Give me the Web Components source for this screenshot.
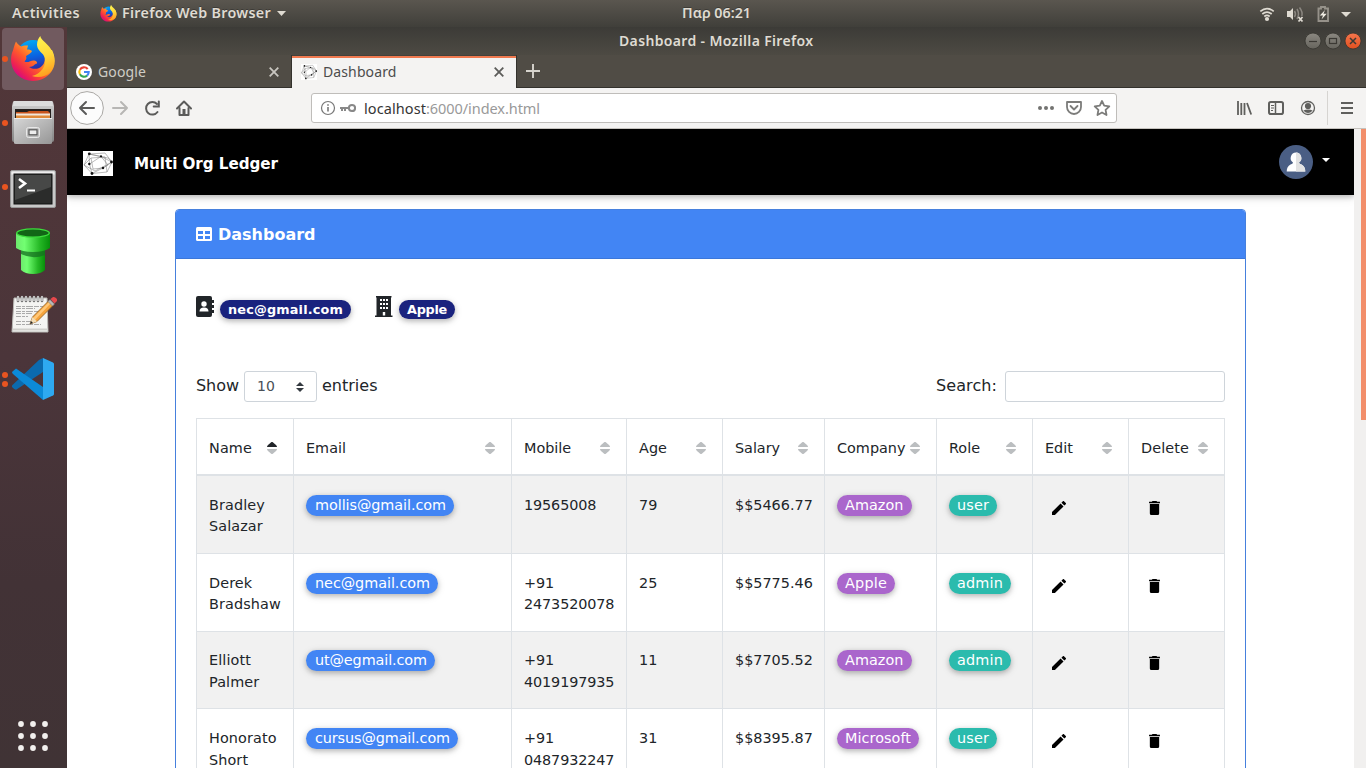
<!DOCTYPE html>
<html lang="en">
<head>
<meta charset="utf-8">
<title>Dashboard</title>
<style>
html,body{margin:0;height:100%;overflow:hidden;background:#fff;font-family:"DejaVu Sans",sans-serif}
</style>
</head>
<body>
<desktop-shell></desktop-shell>
<script>
const define = (name, css, html) => customElements.define(name, class extends HTMLElement {
  connectedCallback() {
    if (this.shadowRoot) return;
    const root = this.attachShadow({mode: 'open'});
    root.innerHTML = `<style>*{box-sizing:border-box}svg{display:block;flex:none}${css}</style>` + (typeof html === 'function' ? html(this) : html);
  }
});

define('desktop-shell', `
:host{display:flex;flex-direction:column;width:1366px;height:768px;overflow:hidden}
main{display:flex;flex:1;min-height:0}`, `
<top-panel></top-panel>
<main><app-dock></app-dock><browser-window></browser-window></main>`);

const firefox = size => `<svg width="${size}" height="${size}" viewBox="0 0 46 46">
<defs><linearGradient id="fo" x1=".9" y1=".1" x2=".15" y2=".85"><stop offset="0" stop-color="#fff24a"/><stop offset=".3" stop-color="#ffb02a"/><stop offset=".6" stop-color="#ff5a2c"/><stop offset=".85" stop-color="#f0244f"/><stop offset="1" stop-color="#d80c7c"/></linearGradient>
<linearGradient id="fb" x1=".4" y1="0" x2=".6" y2="1"><stop offset="0" stop-color="#00a8f4"/><stop offset=".5" stop-color="#0a62e0"/><stop offset="1" stop-color="#3a1b8c"/></linearGradient>
<linearGradient id="fy" x1=".4" y1="0" x2=".6" y2="1"><stop offset="0" stop-color="#fff44f"/><stop offset=".5" stop-color="#ffd83a"/><stop offset="1" stop-color="#ff9a1e"/></linearGradient></defs>
<circle cx="23" cy="20.500" r="16.500" fill="url(#fb)"/>
<path d="M6 5.500C7.500 8 9 9.500 11.500 10.500C13 9.500 15 9.300 18 9.500L17 13.500C19 13.300 21 14 22 15C21 18 17 18.500 16 20.500C17 22 16 24 14.500 25.500C18 27.500 21 24 24 24.500C26 24.500 27.500 26 27 27.500C24 28 24 31 19 31C25 35 32 32 34 27C35.500 23 35 18 32 14L42 14C46 22 46 31 39.500 38C31 47 16 47 7.500 39C.5 32 -.5 22 3 14.500C3.500 12 4.800 8 6 5.500Z" fill="url(#fo)"/>
<path d="M30.300 0C31 4 36 6.500 39.500 11C46 19 45.500 30 40.500 36C36 41 28 42 22 40C31 38 36.500 30 34.800 22C33.500 16.500 27.500 15.500 27 9C27 5 28.500 2 30.300 0Z" fill="url(#fy)"/></svg>`;

define('top-panel', `
:host{display:flex;align-items:center;height:27px;flex:none;background:linear-gradient(#5a564f,#403f3a);color:#dfdbd2;font:600 14.300px/27px "Noto Sans",sans-serif;padding:0 10px 0 12px;text-shadow:0 -1px #0004}
fit-text{margin-top:-2px}
.l,.c,.r{display:flex;align-items:center}.l{width:670px}.r{margin-left:auto}
.l svg:first-of-type{margin:0 5px 0 20px}.car{margin-left:6px}`, `
<div class="l"><fit-text w="68">Activities</fit-text>${firefox(17)}<fit-text w="149">Firefox Web Browser</fit-text>
<svg class="car" width="9" height="5"><path d="M0 0H9L4.500 5Z" fill="#dfdbd2"/></svg></div>
<div class="c"><fit-text w="69">Παρ 06:21</fit-text></div>
<div class="r"><svg width="104" height="20" viewBox="1252 3 104 20">
<g fill="none" stroke="#dfdbd2" stroke-width="1.700"><path d="M1260.300 10.300Q1267 4.800 1273.700 10.300M1262.300 13Q1267 9.200 1271.700 13M1264.300 15.500Q1267 13.300 1269.700 15.500"/></g><circle cx="1267" cy="18" r="2.100" fill="#dfdbd2"/>
<path d="M1287 10H1290L1293 7V19L1290 16H1287Z" fill="#dfdbd2"/><g fill="none" stroke="#8b8780" stroke-width="1.500"><path d="M1294.500 10Q1296.500 13 1294.500 16M1297 8Q1300 13 1297 18M1299.500 6.500Q1303 11 1301.800 15"/></g><path d="M1298.500 16L1302.500 20.500M1302.500 16L1298.500 20.500" stroke="#dfdbd2" stroke-width="1.800"/>
<path d="M1318.500 7.500H1321V6H1325V7.500H1328V20H1318.500Z" fill="none" stroke="#96928a" stroke-width="1.900"/><path d="M1325 9L1319.800 14.500H1323L1321.500 18.500L1326.700 12.800H1323.500Z" fill="#efebe2"/>
<path d="M1341 11H1351L1346 16Z" fill="#dfdbd2"/></svg></div>`);

define('dock-item', `
:host{display:flex;align-items:center;justify-content:center;height:64px;position:relative}
.tile{display:flex;align-items:center;justify-content:center;width:62px;height:62px;border-radius:4px;margin-right:1px}
:host([active]) .tile{background:#715a5f}
.pips{position:absolute;left:2px;top:0;height:64px;display:flex;flex-direction:column;justify-content:center;gap:3px}
.pips i{width:6px;height:6px;border-radius:50%;background:#e95420}`,
el => `<div class="pips">${'<i></i>'.repeat(+el.getAttribute('open') || 0)}</div><div class="tile"><slot></slot></div>`);

define('app-dock', `
:host{display:flex;flex-direction:column;width:67px;flex:none;background:linear-gradient(#523739,#4b353a 45%,#423236 75%,#403335)}
.grid{margin:auto 0 17px 18px}`, `
<dock-item open="1" active>${firefox(46)}</dock-item>
<dock-item open="1"><svg width="42" height="44" viewBox="0 0 42 44"><defs><linearGradient id="ca" x2="0" y2="1"><stop stop-color="#d0d0d0"/><stop offset="1" stop-color="#858585"/></linearGradient><linearGradient id="cb" x2="1" y2="1"><stop stop-color="#d6d6d6"/><stop offset="1" stop-color="#969696"/></linearGradient></defs>
<path d="M1 1Q1 0 3 0H39Q41 0 41 1L42 5V39Q42 41 40 41H2Q0 41 0 39V5Z" fill="url(#ca)"/><path d="M2 0H40L41 5H1Z" fill="#dcdcdc"/><path d="M3 8H39V19H3Z" fill="#241f1d"/><path d="M4 11H15L17 10H36L38 12V18H4Z" fill="#c8541c"/><path d="M4 12.500H38V18H4Z" fill="#f0e6da"/><path d="M4 14.500H38V18H4Z" fill="#e08a39"/><path d="M2 17H40V42Q40 43 38 43H4Q2 43 2 42Z" fill="url(#cb)"/><path d="M2 17.500H40" stroke="#eee"/><rect x="14.500" y="26.500" width="13" height="10" rx="2" fill="#bbb" stroke="#e8e8e8"/><rect x="17" y="28.800" width="8" height="5" fill="#ededed" stroke="#555" stroke-width="1.200"/></svg></dock-item>
<dock-item open="1"><svg width="46" height="38" viewBox="0 0 46 38" style="margin-top:3px"><rect x=".5" y=".5" width="45" height="37" rx="1.500" fill="#c8c8c8" stroke="#989898"/><rect x="1.500" y="1.500" width="43" height="3" fill="#eee"/><rect x="4" y="4" width="38" height="30" fill="#2b2c2b" stroke="#111"/><path d="M5 5H41V17L5 30Z" fill="#565756" opacity=".65"/><path d="M9 9L15 13.500L9 18" fill="none" stroke="#fff" stroke-width="2.600"/><path d="M17 20.500H25" stroke="#fff" stroke-width="2"/></svg></dock-item>
<dock-item><svg width="34" height="46" viewBox="0 0 34 46"><defs><linearGradient id="pg"><stop stop-color="#6dea6d"/><stop offset=".25" stop-color="#72ff72"/><stop offset=".7" stop-color="#25b825"/><stop offset="1" stop-color="#078f0a"/></linearGradient></defs><path d="M5 20H29V42Q25 46 17 46T5 42Z" fill="url(#pg)"/><path d="M5 20H29V27Q17 32 5 26Z" fill="#167020" opacity=".75"/><path d="M0 5H34V20Q28 24 17 24T0 20Z" fill="url(#pg)"/><ellipse cx="17" cy="5" rx="16.300" ry="4.200" fill="#126516" stroke="#3ddd3d" stroke-width="1.300"/></svg></dock-item>
<dock-item><svg width="46" height="38" viewBox="0 0 46 38" style="margin:-2px 0 0 2px"><path d="M3 3H36L37 37H1Z" fill="#f4f4f2" stroke="#b9b9b5"/><path d="M1.500 34.500H37" stroke="#d0d0cc" stroke-width="2"/><g stroke="#aaa" stroke-width="1"><path d="M5 11.500H32M5 13.500H24M5 16.500H30M5 18.500H21M5 21.500H17M5 26.500H22M5 29.500H30" stroke-dasharray="5 1 3 1 7 1"/></g><path d="M7 2V6M11 2V6M15 2V6M19 2V6M23 2V6M27 2V6M31 2V6" stroke="#777" stroke-width="2.600" stroke-linecap="round"/><path d="M7 1V6M11 1V6M15 1V6M19 1V6M23 1V6M27 1V6M31 1V6" stroke="#eee" stroke-width="1.200"/><path d="M19 29L21.500 22L38 5.500L42.500 10L26 26.500Z" fill="#f5a33b" stroke="#8c5a20" stroke-width=".8"/><path d="M22 23L38.500 6.500L40 8L24 25Z" fill="#ffc777"/><path d="M19 29L21.500 22L26 26.500Z" fill="#f3ddb5"/><path d="M19 29L20 26L22 28Z" fill="#222"/><path d="M37 6.500L39 4.500L43.500 9L41.500 11Z" fill="#b9b9b9" stroke="#777" stroke-width=".6"/><path d="M39.500 4L42 2Q44 1.500 45.500 3.500T45.500 6.500L43.500 8.500Z" fill="#e7484c"/></svg></dock-item>
<dock-item open="2"><svg width="42" height="42" viewBox="0 0 42 42"><path d="M0 27.500L27 2L31 0V14L4.500 31.500Q3 32.300 0 29Z" fill="#0b6aae"/><path d="M0 14L4 10.500L31 29V42L1 16Q0 15 0 14Z" fill="#0c8ad8"/><path d="M31 0L41 4.500Q42 5 42 6V36Q42 37 41 37.500L31 42Z" fill="#2ea9f1"/></svg></dock-item>
<svg class="grid" width="30" height="30" fill="#f2f0ee">${[3,15,27].map(y=>[3,15,27].map(x=>`<circle cx="${x}" cy="${y}" r="2.900"/>`).join('')).join('')}</svg>`);

define('browser-window', `:host{display:flex;flex-direction:column;flex:1;min-width:0}`,
`<title-bar></title-bar><tab-strip></tab-strip><tool-bar></tool-bar><page-view></page-view>`);

define('title-bar', `
:host{display:flex;height:28px;flex:none;align-items:center;background:linear-gradient(#3c3b37,#4d4a43);color:#dfdbd2;font:600 14px/28px "Noto Sans",sans-serif;padding-right:3px}
fit-text{margin-left:552px}svg{margin-left:auto}`, `
<fit-text w="194.5">Dashboard - Mozilla Firefox</fit-text>
<svg width="60" height="20" viewBox="1303 31 60 20"><defs><linearGradient id="g" x2="0" y2="1"><stop stop-color="#8b8881"/><stop offset="1" stop-color="#66645d"/></linearGradient><linearGradient id="o" x2="0" y2="1"><stop stop-color="#f5764d"/><stop offset="1" stop-color="#e2501f"/></linearGradient></defs>
<circle cx="1313" cy="41" r="8" fill="url(#g)" stroke="#35342f" stroke-width=".8"/><circle cx="1333" cy="41" r="8" fill="url(#g)" stroke="#35342f" stroke-width=".8"/><circle cx="1353" cy="41" r="8" fill="url(#o)" stroke="#35342f" stroke-width=".8"/>
<g fill="none" stroke="#3b3934" stroke-width="1.200"><path d="M1309 41.500H1317"/><rect x="1329.500" y="38.500" width="7" height="5"/><path d="M1350 38L1356 44M1356 38L1350 44" stroke-width="1.500"/></g></svg>`);

const network = (w, h, sw) => `<svg width="${w}" height="${h}" viewBox="0 0 30 25" preserveAspectRatio="none" style="background:#fff"><g fill="none" stroke="#777" stroke-width="${sw}"><path d="M6 3L22 2L29 11L24 21L9 22.500L1 14Z"/><path d="M6 3L18 5.500L29 11L20 17L9 22.500L6.500 13Z"/><path d="M6.500 13L18 5.500L25 14L20 17L10 18L8 7L22 6L24 21M1 14L8 7M6 3L25 7L29 11L12 20L1 14"/></g><g fill="#111"><circle cx="6.300" cy="2.800" r="1.400"/><circle cx="18" cy="5.300" r="1.100"/><circle cx="28.500" cy="11" r="1.400"/><circle cx="6.300" cy="13" r="1.200"/><circle cx="20" cy="17" r="1.200"/><circle cx="9" cy="22.500" r="1.400"/></g></svg>`;

define('tab-strip', `
:host{display:flex;height:33px;flex:none;background:#504c45;font:14px/32px "Noto Sans",sans-serif;box-shadow:inset 0 -1px #33312c}
.tab{display:flex;align-items:center;color:#cfccc5;padding-left:9px;width:224px}
.active{background:#f4f3f2;color:#4c4c4c;border:1px solid #33312c;border-width:0 1px;width:226px;box-shadow:inset 0 1px #43413b,inset 0 3px #f0794f}
.tab svg:last-child{margin-left:auto;margin-right:12px}
.tab svg:first-child{margin-right:6px}.plus{margin:9px 0 0 9px}`, `
<div class="tab"><svg width="16" height="16"><circle cx="8" cy="8" r="8" fill="#fff"/><g fill="none" stroke-width="2.100"><path d="M11.700 5A4.800 4.800 0 0 0 3.900 5.700" stroke="#ea4335"/><path d="M3.900 5.700A4.800 4.800 0 0 0 3.900 10.300" stroke="#fbbc05"/><path d="M3.900 10.300A4.800 4.800 0 0 0 11.100 11.600" stroke="#34a853"/><path d="M11.100 11.600A4.800 4.800 0 0 0 12.700 8H8" stroke="#4285f4"/></g></svg><fit-text w="48">Google</fit-text><svg width="10" height="10"><path d="M.7 .7L9.300 9.300M9.300 .7L.7 9.300" stroke="#c9c6c0" stroke-width="1.800"/></svg></div>
<div class="tab active">${network(16,16,.6)}<fit-text w="73.5">Dashboard</fit-text><svg width="10" height="10"><path d="M.7 .7L9.300 9.300M9.300 .7L.7 9.300" stroke="#5c5c5a" stroke-width="1.800"/></svg></div>
<svg class="plus" width="14" height="14"><path d="M7 0V14M0 7H14" stroke="#d7d4cd" stroke-width="1.900"/></svg>`);

define('tool-bar', `
:host{display:flex;height:41px;flex:none;align-items:center;background:#f4f3f2;border-bottom:1px solid #c5c2be}
.url{display:flex;align-items:center;width:806px;height:30px;border:1px solid #bfbdba;border-radius:3px;background:#fff;font:14.500px/28px "Noto Sans",sans-serif;color:#353535;padding-left:8px;margin-left:117px}
.url em{font-style:normal;color:#999}.url svg:first-child{margin-right:4px}.url>fit-text{margin-left:8px}
.url svg:last-child{margin-left:auto;margin-right:4px}.right{margin-left:auto;margin-right:9px}.nav{margin-left:2px}`, `
<svg class="nav" width="125" height="38" viewBox="69 89 125 38"><circle cx="87" cy="108" r="16.400" fill="#fcfcfc" stroke="#aaa8a5"/>
<g fill="none" stroke="#5b5b5a" stroke-width="2" stroke-linejoin="round" stroke-linecap="round"><path d="M80 108H94M86 102L80 108L86 114"/><g stroke="#b7b6b4"><path d="M113 108H127M121 102L127 108L121 114"/></g><path d="M157.500 112A6.300 6.300 0 1 1 157 104"/><path d="M153.700 106.500H158.800V101.500" stroke-linejoin="miter"/><path d="M177 108.500L184 101.500L191 108.500"/><path d="M179.500 108V115H188.500V108" /></g><path d="M182.500 115V109H185.500V115Z" fill="#5b5b5a"/></svg>
<div class="url"><svg width="16" height="16"><circle cx="8" cy="8" r="6.500" fill="none" stroke="#777" stroke-width="1.200"/><path d="M8 7V11.500M8 4.200V5.800" stroke="#777" stroke-width="1.600"/></svg>
<svg width="16" height="10"><path d="M0 4H8V6H6V8H4V6H3V8H1V6H0Z" fill="#888"/><circle cx="12" cy="5" r="3.100" fill="none" stroke="#888" stroke-width="2"/></svg>
<fit-text w="62">localhost</fit-text><em><fit-text w="114">:6000/index.html</fit-text></em>
<svg width="76" height="20" viewBox="1036 98 76 20"><g fill="#737371"><circle cx="1040" cy="108" r="2"/><circle cx="1046" cy="108" r="2"/><circle cx="1052" cy="108" r="2"/></g><g fill="none" stroke="#7c7c7a" stroke-width="1.800" stroke-linejoin="round"><path d="M1067 102H1081V107A7 7 0 0 1 1067 107Z"/><path d="M1070.500 106L1074 109.500L1077.500 106" stroke-linecap="round"/><path d="M1102 101L1104.200 105.700L1109.300 106.300L1105.600 109.800L1106.500 115L1102 112.500L1097.500 115L1098.400 109.800L1094.700 106.300L1099.800 105.700Z"/></g></svg></div>
<svg class="right" width="122" height="34" viewBox="1235 91 122 34"><g fill="none" stroke="#5f5f5d" stroke-width="2"><path d="M1238 101V115M1241.300 103V115M1244.500 103V115M1247 103L1251.200 114.500" stroke-width="1.800"/><rect x="1269" y="102" width="14" height="12" rx="1.800"/><path d="M1275.500 102V114" stroke-width="1.500"/><path d="M1271 105.500H1274M1271 108H1274M1271 110.500H1273" stroke-width="1"/><circle cx="1308" cy="108" r="6.500" stroke-width="1.300"/><path d="M1341 103H1353M1341 108H1353M1341 113H1353"/></g><circle cx="1308" cy="106" r="3.100" fill="#5f5f5d"/><path d="M1303.300 110.500Q1308 108.500 1312.700 110.500Q1308 115.500 1303.300 110.500Z" fill="#5f5f5d"/><path d="M1327.500 91V125" stroke="#d6d4d1"/></svg>`);

define('page-view', `
:host{display:flex;flex:1;min-height:0;overflow:hidden;background:#fff}
article{flex:1;min-width:0;overflow:hidden;height:639px}
.bar{width:12px;flex:none;background:#f1f0ef;display:flex;justify-content:flex-end}
.bar i{width:5px;height:291px;background:#f28e6a}`,
`<article><site-nav></site-nav><dash-card></dash-card></article><div class="bar"><i></i></div>`);

define('site-nav', `
:host{display:flex;height:66px;align-items:center;background:#000;color:#fff;font:bold 15.200px/24px "DejaVu Sans",sans-serif;padding:0 24px 0 16px;box-shadow:0 2px 5px #0003,0 2px 10px #0002;position:relative}
fit-text{margin:3px 0 0 21px}.net{padding-top:3px}.user{margin-left:auto}.car{margin:-4px 0 0 9px}`, `
<div class="net">${network(30,25,.5)}</div><fit-text w="144">Multi Org Ledger</fit-text>
<svg class="user" width="34" height="34"><circle cx="17" cy="17" r="17" fill="#4a5e84"/><path d="M17 7.500A5.500 5.500 0 0 1 20 17.500Q20 19 22.500 19.500Q26.300 21.500 26.300 26.500H7.700Q7.700 21.500 11.500 19.500Q14 19 14 17.500A5.500 5.500 0 0 1 17 7.500Z" fill="#fff"/><path d="M17 7.500A5.500 5.500 0 0 1 20 17.500Q20 19 22.500 19.500Q26.300 21.500 26.300 26.500H17Z" fill="#e3e3e3"/></svg>
<svg class="car" width="8" height="4"><path d="M0 0H8L4 4Z" fill="#fff"/></svg>`);

define('pill-badge', `
:host{display:inline-flex;align-items:flex-start;height:21px;border-radius:11px;padding:0 8px;color:#fff;background:var(--c);box-shadow:0 2px 5px #0003,0 2px 8px #0002;font-size:14.400px;line-height:20px}
:host([strong]){height:19px;font-size:12.800px;font-weight:bold;line-height:19px}`,
el => `<fit-text w="${el.getAttribute('w')}">${el.textContent}</fit-text>`);

define('dash-card', `
:host{display:flex;flex-direction:column;width:1071px;margin:14px 108px 0;border:1px solid #4680dd;border-radius:4px 4px 0 0;height:1100px;color:#212529;font:16px/24px "DejaVu Sans",sans-serif;overflow:hidden}
header{display:flex;align-items:center;height:49px;background:#4285f4;border-bottom:1px solid #3b77da;color:#fff;font-weight:bold;padding-left:20px;gap:6px;flex:none}
header fit-text{margin-top:2px}
.body{display:flex;flex-direction:column;padding:37px 20px 0}
.who,.ctl{display:flex}.who{height:24px;margin-bottom:51px}.who pill-badge{margin-top:4px}.who svg{margin-right:6px}.who svg+pill-badge+svg{margin-left:24px;margin-right:6px}
.ctl{align-items:center;height:31px;margin-bottom:16px}.ctl>fit-text{margin-top:-1px}
.sel{display:flex;align-items:center;justify-content:space-between;width:73px;height:31px;border:1px solid #ced4da;border-radius:3px;margin:0 5px;padding:0 12px;font-size:14px;color:#495057}
.sel fit-text{margin-top:-2px}
.inp{width:220px;height:31px;border:1px solid #ced4da;border-radius:3px;margin-left:8px}.s{margin-left:auto}`, `
<header><svg width="16" height="14"><rect width="16" height="14" rx="1.500" fill="#fff"/><path d="M2 4H7V7H2ZM9 4H14V7H9ZM2 9H7V12H2ZM9 9H14V12H9Z" fill="#4285f4"/></svg><fit-text w="97.5">Dashboard</fit-text></header>
<div class="body"><div class="who">
<svg width="18" height="21"><rect width="16" height="21" rx="2" fill="#212529"/><path d="M16 4H18V7H16ZM16 9H18V12H16ZM16 14H18V17H16Z" fill="#212529"/><circle cx="8" cy="8" r="2.700" fill="#fff"/><path d="M3.500 15.500Q3.500 11.500 8 11.500T12.500 15.500Z" fill="#fff"/></svg><pill-badge strong w="115" style="--c:#1a237e">nec@gmail.com</pill-badge>
<svg width="18" height="21"><path d="M1 0H16.500V1.500H16V19.500H17.500V21H0V19.500H1.500V1.500H1Z" fill="#212529"/><path d="M5 3H7V5H5ZM8 3H10V5H8ZM11 3H13V5H11ZM5 7H7V9H5ZM8 7H10V9H8ZM11 7H13V9H11ZM5 11H7V13H5ZM8 11H10V13H8ZM11 11H13V13H11ZM7.800 16H10.200V19.500H7.800Z" fill="#fff"/></svg><pill-badge strong w="40" style="--c:#1a237e">Apple</pill-badge></div>
<div class="ctl"><fit-text w="43">Show</fit-text><div class="sel"><fit-text w="18">10</fit-text><svg width="8" height="10"><path d="M0 4H8L4 0ZM0 6H8L4 10Z" fill="#343a40"/></svg></div><fit-text w="55.5">entries</fit-text>
<fit-text class="s" w="61">Search:</fit-text><div class="inp"></div></div>
<data-table></data-table></div>`);

const cols = [['Name',43],['Email',40],['Mobile',47],['Age',28],['Salary',45],['Company',68.5],['Role',31],['Edit',28],['Delete',48]];
const rows = [
  ['Bradley Salazar','mollis@gmail.com',131,'19565008','79','$$5466.77','Amazon',58.5,'user',32],
  ['Derek Bradshaw','nec@gmail.com',115,'+91 2473520078','25','$$5775.46','Apple',42,'admin',46],
  ['Elliott Palmer','ut@egmail.com',112,'+91 4019197935','11','$$7705.52','Amazon',58.5,'admin',46],
  ['Honorato Short','cursus@gmail.com',135,'+91 0487932247','31','$$8395.87','Microsoft',66,'user',32]];

define('data-table', `
:host{display:block;border:1px solid #dee2e6;border-left:0;font-size:14.400px;line-height:21.600px}
.r{display:grid;grid-template-columns:97px 218px 115px 96px 102px 112px 96px 96px 1fr}
.c{border-left:1px solid #dee2e6;padding:18.800px 0 0 12px;min-width:0}
.b{height:77.800px;border-bottom:1px solid #dee2e6}.b:nth-child(odd){background:#f1f1f1}
.h{height:57px;border-bottom:2px solid #dee2e6}
.h .c{display:flex;justify-content:space-between;padding-top:19px;padding-right:16px}.h svg{margin-top:4px}
.b .name{width:77px;letter-spacing:.1px}.b .mob{width:100px;letter-spacing:-.12px}
.ed svg{margin:6px 0 0 7px}.de svg{margin:6px 0 0 8px}`, `
<div class="r h">${cols.map(([t,w],i)=>`<div class="c"><fit-text w="${w}">${t}</fit-text><svg width="10" height="12"><path d="M0 5Q0 4 1 3L4.500 0H5.500L9 3Q10 4 10 5Z" fill="${i?'#bbbec0':'#212529'}"/><path d="M0 7Q0 8 1 9L4.500 12H5.500L9 9Q10 8 10 7Z" fill="#bbbec0"/></svg></div>`).join('')}</div>
${rows.map(r=>`<div class="r b"><div class="c"><div class="name">${r[0].replace(' ','<br>')}</div></div>
<div class="c"><pill-badge w="${r[2]}" style="--c:#4285f4;padding:0 8px 0 9px">${r[1]}</pill-badge></div>
<div class="c"><div class="mob">${r[3].replace(' ','<br>')}</div></div><div class="c">${r[4]}</div><div class="c">${r[5]}</div>
<div class="c"><pill-badge w="${r[7]}" style="--c:#a6c">${r[6]}</pill-badge></div>
<div class="c"><pill-badge w="${r[9]}" style="--c:#2bbbad">${r[8]}</pill-badge></div>
<div class="c ed"><svg width="14" height="14" viewBox="3 3 18 18"><path d="M3 17.250V21h3.750L17.810 9.940l-3.750-3.750L3 17.250zM20.710 7.040a1 1 0 0 0 0-1.410l-2.340-2.340a1 1 0 0 0-1.410 0l-1.830 1.830 3.750 3.750 1.830-1.830z"/></svg></div>
<div class="c de"><svg width="11" height="14" viewBox="5 3 14 18"><path d="M6 19a2 2 0 0 0 2 2h8a2 2 0 0 0 2-2V7H6v12zM19 4h-3.500l-1-1h-5l-1 1H5v2h14V4z"/></svg></div></div>`).join('')}`);

/* Label whose letter spacing is adjusted so the run fills the width in its "w" attribute. */
customElements.define('fit-text', class extends HTMLElement {
  connectedCallback() {
    if (this.shadowRoot) return;
    this.attachShadow({mode: 'open'}).innerHTML = '<style>:host{display:block;white-space:nowrap;flex:none}span{display:inline-block}</style><span><slot></slot></span>';
    const w = +this.getAttribute('w'), span = this.shadowRoot.querySelector('span');
    this.style.width = w + 'px';
    const now = span.getBoundingClientRect().width;
    span.style.letterSpacing = (w - now) / this.textContent.length + 'px';
  }
});
</script>
</body>
</html>
